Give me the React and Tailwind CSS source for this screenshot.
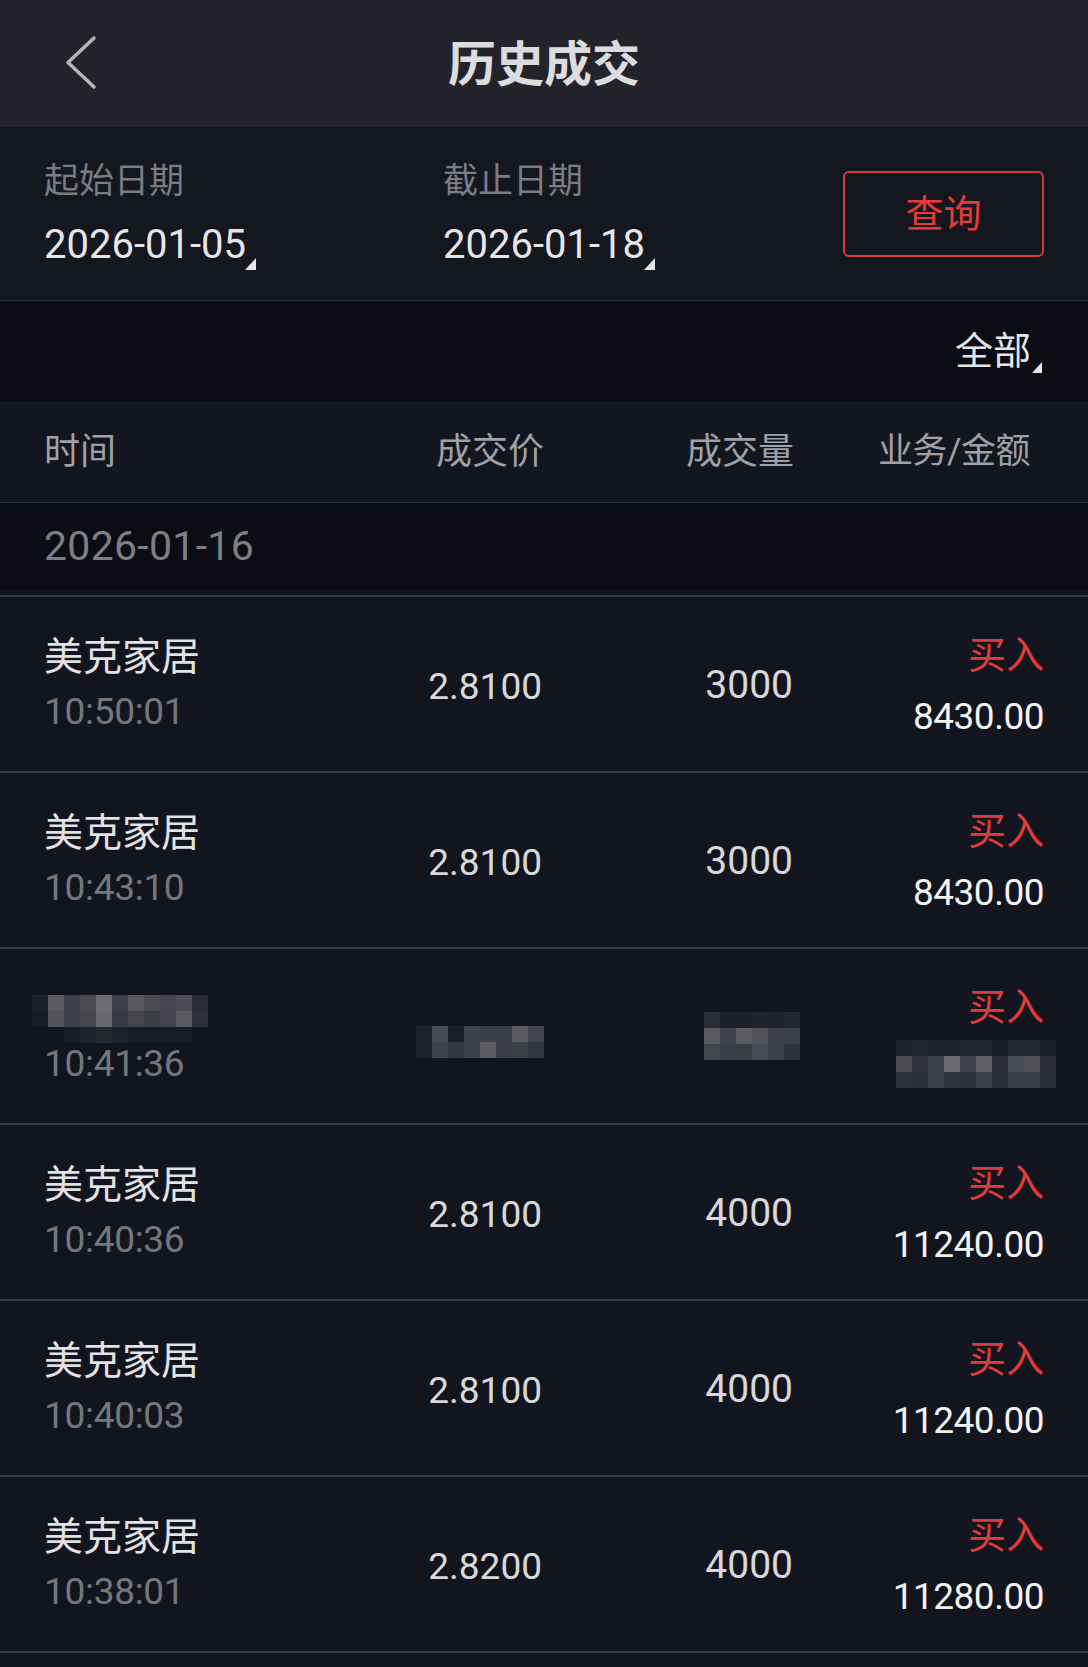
import React from "react";

const Tri = ({ size = 11 }) => (
  <svg width={size} height={size + 1} viewBox="0 0 11 12" className="shrink-0">
    <polygon points="0,12 11,12 11,0" fill="#e6e6e8" />
  </svg>
);

const Mosaic = ({ rows }) => (
  <div className="flex flex-col">
    {rows.map((r, i) => (
      <div key={i} className="flex">
        {r.map((c, j) => (
          <div key={j} className="w-4 h-4" style={{ background: c }} />
        ))}
      </div>
    ))}
  </div>
);

const nameMosaic = [
  ["#1e2029", "#5a5b61", "#3f4149", "#4a4b51", "#6b6c71", "#3e4049", "#56575c", "#4b4c52", "#45464e", "#4c4c54", "#2a2c34"],
  ["#1a1c25", "#52535a", "#3d3f47", "#45464c", "#68696e", "#383a43", "#45464d", "#3c3e46", "#43444c", "#5a5a60", "#30323a"],
  ["#13151e", "#13151e", "#1b1d26", "#20222b", "#262830", "#1f212a", "#1a1c25", "#1a1c25", "#1a1c25", "#1a1c25", "#13151e"],
];
const priceMosaic = [
  ["#1f212a", "#484a52", "#1e2029", "#3f4149", "#3b3d45", "#3b3d45", "#5a5b60", "#43454d"],
  ["#1f212a", "#40424a", "#35373f", "#3f4149", "#5c5d62", "#3b3d45", "#3e4048", "#34363e"],
];
const qtyMosaic = [
  ["#2a2c35", "#1e2029", "#1e2029", "#22242d", "#20222b", "#252730"],
  ["#5a5b61", "#40424a", "#5c5d62", "#525358", "#3f4149", "#3d3f47"],
  ["#44464e", "#3b3d45", "#3b3d45", "#4a4c55", "#3f4149", "#30323a"],
];
const amtMosaic = [
  ["#1f2129", "#23252d", "#1f2129", "#1f2129", "#23252d", "#23252d", "#1b1d25", "#262830", "#262830", "#1e2028"],
  ["#4a4c52", "#33353d", "#3f4149", "#6a6b70", "#40424a", "#616267", "#2a2c34", "#4b4d55", "#4f5157", "#2c2e36"],
  ["#30323a", "#2e3038", "#3f4149", "#33353d", "#2f3139", "#3e4048", "#2c2e36", "#3b3d45", "#3b3d45", "#2a2c34"],
];

const rows = [
  { name: "美克家居", time: "10:50:01", price: "2.8100", qty: "3000", amt: "8430.00" },
  { name: "美克家居", time: "10:43:10", price: "2.8100", qty: "3000", amt: "8430.00" },
  { blur: true, time: "10:41:36" },
  { name: "美克家居", time: "10:40:36", price: "2.8100", qty: "4000", amt: "11240.00" },
  { name: "美克家居", time: "10:40:03", price: "2.8100", qty: "4000", amt: "11240.00" },
  { name: "美克家居", time: "10:38:01", price: "2.8200", qty: "4000", amt: "11280.00" },
];

const Row = ({ r }) => (
  <div className="flex h-[176px] border-t-2 border-[#363945] bg-[#13151e] pl-[44px] pr-[44px]">
    <div className="flex-1 flex flex-col pt-[41px]">
      {r.blur ? (
        <div className="h-[39px] ml-[-12px] pt-[5px]">
          <Mosaic rows={nameMosaic} />
        </div>
      ) : (
        <div className="h-[39px] text-[39px] leading-[39px] text-[#e2e2e4]">{r.name}</div>
      )}
      <div className="mt-[16px] h-[37px] text-[37px] leading-[37px] tracking-[-0.3px] text-[#75777d]">{r.time}</div>
    </div>
    <div className="w-[200px] flex items-center justify-end pt-[5px]">
      {r.blur ? (
        <div className="mr-[-2px] mt-[6px]">
          <Mosaic rows={priceMosaic} />
        </div>
      ) : (
        <div className="text-[37px] leading-[37px] text-[#d8d8da]">{r.price}</div>
      )}
    </div>
    <div className="w-[250px] flex items-center justify-end pt-[3px]">
      {r.blur ? (
        <div className="mr-[-8px] mt-[-4px]">
          <Mosaic rows={qtyMosaic} />
        </div>
      ) : (
        <div className="text-[39px] leading-[39px] mr-[-1px] text-[#d8d8da]">{r.qty}</div>
      )}
    </div>
    <div className="w-[252px] flex flex-col items-end pt-[39px]">
      <div className="h-[38px] text-[38px] leading-[38px] text-[#e03c3e]">买入</div>
      {r.blur ? (
        <div className="mt-[14px] mr-[-12px]">
          <Mosaic rows={amtMosaic} />
        </div>
      ) : (
        <div className="mt-[24px] text-[37px] leading-[37px] tracking-[-0.5px] text-[#f2f2f2]">{r.amt}</div>
      )}
    </div>
  </div>
);

export default function App() {
  return (
    <div className="w-[1088px] h-[1667px] overflow-hidden flex flex-col bg-[#13151e] font-[Roboto,'Noto_Sans_CJK_SC',sans-serif]">
      {/* Header */}
      <div className="relative h-[127px] shrink-0 bg-[#22232b] flex items-center justify-center">
        <svg width="40" height="60" viewBox="0 0 40 60" className="absolute left-[62px] top-[33px]">
          <polyline points="32,5 6,29.5 32,54" fill="none" stroke="#b5b5b8" strokeWidth="3.5" strokeLinecap="round" strokeLinejoin="round" />
        </svg>
        <div className="mt-[2px] text-[48px] leading-[48px] font-bold text-[#dcdcde]">历史成交</div>
      </div>

      {/* Date filter */}
      <div className="h-[173px] shrink-0 bg-[#15171f] flex pl-[44px] pr-[44px]">
        <div className="w-[399px] flex flex-col pt-[37px]">
          <div className="h-[35px] text-[35px] leading-[35px] text-[#7b7d83]">起始日期</div>
          <div className="mt-[26px] flex items-end text-[40px] leading-[40px] text-[#e6e6e8]">
            <span>2026-01-05</span>
            <span className="mb-[-5px] -ml-px"><Tri /></span>
          </div>
        </div>
        <div className="flex-1 flex flex-col pt-[37px]">
          <div className="h-[35px] text-[35px] leading-[35px] text-[#7b7d83]">截止日期</div>
          <div className="mt-[26px] flex items-end text-[40px] leading-[40px] text-[#e6e6e8]">
            <span>2026-01-18</span>
            <span className="mb-[-5px] -ml-px"><Tri /></span>
          </div>
        </div>
        <div className="pt-[44px]">
          <div className="w-[201px] h-[86px] border-2 border-[#d63a3c] rounded-[6px] flex items-center justify-center text-[38px] leading-[38px] text-[#e5393b]">
            查询
          </div>
        </div>
      </div>

      {/* 全部 */}
      <div className="h-[101px] shrink-0 border-t border-[#2e3038] bg-[#0c0d14] flex items-center justify-end pr-[46px]">
        <div className="flex items-end">
          <span className="text-[38px] leading-[38px] text-[#e6e6e8]">全部</span>
          <span className="mb-[-3px] ml-[1px]"><Tri size={10} /></span>
        </div>
      </div>

      {/* Column header */}
      <div className="h-[102px] shrink-0 border-b border-[#2e3038] bg-[#13161e] flex items-center pl-[44px] pr-[44px] text-[36px] leading-[36px] text-[#9fa1a7]">
        <div className="flex-1">时间</div>
        <div className="w-[200px] text-right">成交价</div>
        <div className="w-[250px] text-right mr-[-2px]">成交量</div>
        <div className="w-[252px] text-right pr-[14px] text-[35px] tracking-[-0.5px]">业务/金额</div>
      </div>

      {/* Date group */}
      <div className="h-[87px] shrink-0 bg-[#0c0d14] flex items-center pl-[44px] text-[41px] leading-[41px] tracking-[0.3px] text-[#7d7f85]">
        2026-01-16
      </div>
      <div className="h-[5px] shrink-0 bg-[#11131b]" />

      {rows.map((r, i) => (
        <Row key={i} r={r} />
      ))}
      <div className="flex-1 border-t-2 border-[#363945] bg-[#13151e]" />
    </div>
  );
}
